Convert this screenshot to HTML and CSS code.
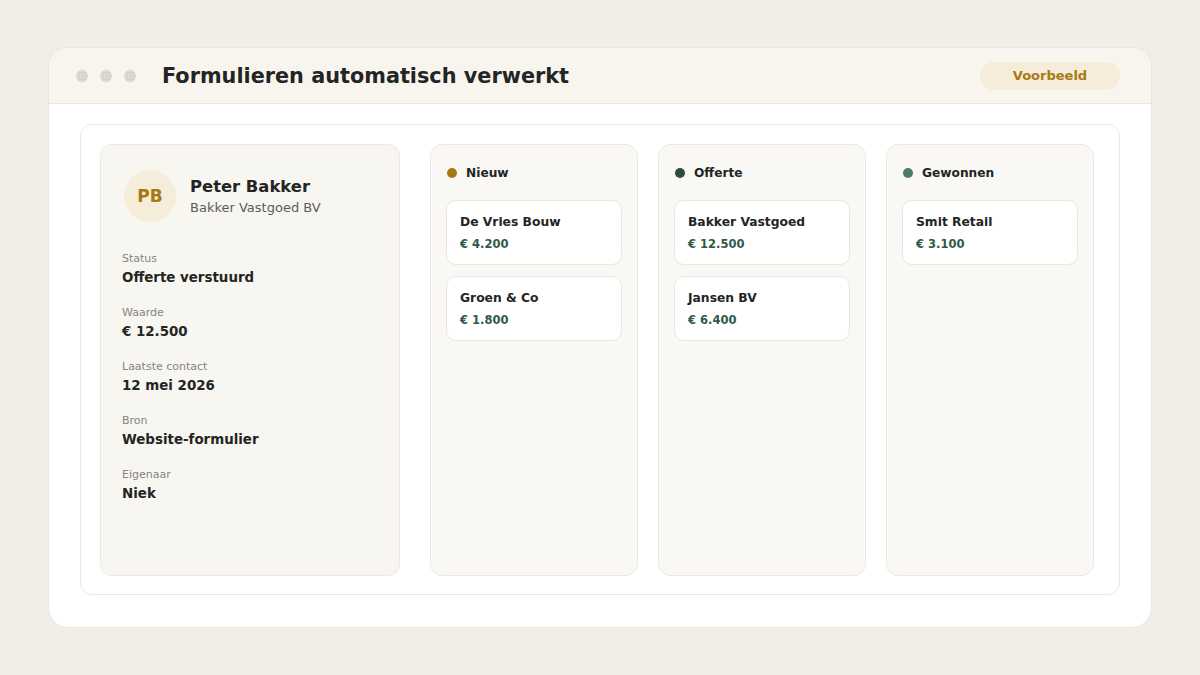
FILE: index.html
```html
<!DOCTYPE html>
<html lang="nl">
<head>
  <meta charset="UTF-8">
  <meta name="viewport" content="width=device-width, initial-scale=1.0">
  <title>Formulieren automatisch verwerkt</title>
  <link rel="stylesheet" href="styles.css">
</head>
<body>
  <div class="window">
    <div class="titlebar">
      <div class="dots">
        <span class="dot"></span>
        <span class="dot"></span>
        <span class="dot"></span>
      </div>
      <h1 class="title">Formulieren automatisch verwerkt</h1>
      <span class="badge">Voorbeeld</span>
    </div>
    <div class="content">
      <div class="panel">
        <div class="contact">
          <div class="person">
            <div class="avatar">PB</div>
            <div>
              <div class="name">Peter Bakker</div>
              <div class="company">Bakker Vastgoed BV</div>
            </div>
          </div>
          <div class="field">
            <div class="label">Status</div>
            <div class="value">Offerte verstuurd</div>
          </div>
          <div class="field">
            <div class="label">Waarde</div>
            <div class="value">€ 12.500</div>
          </div>
          <div class="field">
            <div class="label">Laatste contact</div>
            <div class="value">12 mei 2026</div>
          </div>
          <div class="field">
            <div class="label">Bron</div>
            <div class="value">Website-formulier</div>
          </div>
          <div class="field">
            <div class="label">Eigenaar</div>
            <div class="value">Niek</div>
          </div>
        </div>

        <div class="column">
          <div class="column-head"><span class="bullet new"></span>Nieuw</div>
          <div class="deal">
            <div class="deal-name">De Vries Bouw</div>
            <div class="deal-amount">€ 4.200</div>
          </div>
          <div class="deal">
            <div class="deal-name">Groen &amp; Co</div>
            <div class="deal-amount">€ 1.800</div>
          </div>
        </div>

        <div class="column">
          <div class="column-head"><span class="bullet quote"></span>Offerte</div>
          <div class="deal">
            <div class="deal-name">Bakker Vastgoed</div>
            <div class="deal-amount">€ 12.500</div>
          </div>
          <div class="deal">
            <div class="deal-name">Jansen BV</div>
            <div class="deal-amount">€ 6.400</div>
          </div>
        </div>

        <div class="column">
          <div class="column-head"><span class="bullet won"></span>Gewonnen</div>
          <div class="deal">
            <div class="deal-name">Smit Retail</div>
            <div class="deal-amount">€ 3.100</div>
          </div>
        </div>
      </div>
    </div>
  </div>
</body>
</html>
```

FILE: styles.css
```css
body {
  font-family: "DejaVu Sans", sans-serif;
  margin: 0;
  padding: 47px 48px 0;
  background-color: #f2eee7;
  color: #222523;
  height: 675px;
  box-sizing: border-box;
  overflow: hidden;
}
.window {
  width: 1104px;
  height: 581px;
  box-sizing: border-box;
  background-color: #fff;
  border: 1px solid #ebe7df;
  border-radius: 20px;
  overflow: hidden;
}
.titlebar {
  height: 56px;
  box-sizing: border-box;
  background-color: #f8f5ef;
  border-bottom: 1px solid #e9e5dd;
  display: flex;
  align-items: center;
  padding: 0 31px 0 27px;
}
.dots {
  display: flex;
  gap: 12px;
}
.dot {
  width: 12px;
  height: 12px;
  border-radius: 50%;
  background: radial-gradient(circle, rgba(255, 255, 255, 0.45) 0.5px, transparent 0.9px) 0 0 / 3px 3px, #d8d3ca;
}
.title {
  margin: 0 0 0 26px;
  font-size: 20.8px;
  font-weight: bold;
  color: #222523;
  flex: 1;
}
.badge {
  width: 140px;
  height: 28px;
  line-height: 28px;
  text-align: center;
  border-radius: 14px;
  background-color: #f5ecda;
  color: #a67a12;
  font-size: 13px;
  font-weight: bold;
}
.content {
  padding: 20px 31px 32px;
}
.panel {
  height: 471px;
  box-sizing: border-box;
  border: 1px solid #ebe8e2;
  border-radius: 12px;
  padding: 19px 19px 18px;
  display: flex;
  gap: 20px;
}
.contact {
  width: 300px;
  margin-right: 10px;
  box-sizing: border-box;
  background-color: #f8f6f0;
  border: 1px solid #ece8e0;
  border-radius: 12px;
  padding: 25px 21px;
}
.person {
  display: flex;
  align-items: center;
  gap: 14px;
  margin-left: 2px;
  margin-bottom: 30px;
}
.avatar {
  width: 52px;
  height: 52px;
  border-radius: 50%;
  background-color: #f5ecda;
  color: #a67a12;
  font-size: 17px;
  font-weight: bold;
  display: flex;
  align-items: center;
  justify-content: center;
}
.name {
  font-size: 16.4px;
  font-weight: bold;
  margin-bottom: 4px;
}
.company {
  font-size: 13px;
  color: #5b5d5a;
}
.field {
  margin-bottom: 21px;
}
.label {
  font-size: 11px;
  color: #858580;
  margin-bottom: 5px;
}
.value {
  font-size: 13.4px;
  font-weight: bold;
}
.column {
  width: 208px;
  box-sizing: border-box;
  background-color: #faf8f4;
  border: 1px solid #ece8e0;
  border-radius: 12px;
  padding: 21px 15px;
  display: flex;
  flex-direction: column;
  gap: 11px;
}
.column-head {
  display: flex;
  align-items: center;
  gap: 9px;
  margin-left: 1px;
  font-size: 12.2px;
  font-weight: bold;
  margin-bottom: 9px;
}
.bullet {
  width: 10px;
  height: 10px;
  border-radius: 50%;
}
.bullet.new {
  background-color: #a67a12;
}
.bullet.quote {
  background-color: #2f4a3e;
}
.bullet.won {
  background-color: #4a7d6e;
}
.deal {
  height: 65px;
  box-sizing: border-box;
  background-color: #fff;
  border: 1px solid #ebe7df;
  border-radius: 10px;
  padding: 14px 13px;
}
.deal-name {
  font-size: 12.3px;
  font-weight: bold;
  margin-bottom: 8px;
}
.deal-amount {
  font-size: 11.5px;
  font-weight: bold;
  color: #2e5a48;
}
```
